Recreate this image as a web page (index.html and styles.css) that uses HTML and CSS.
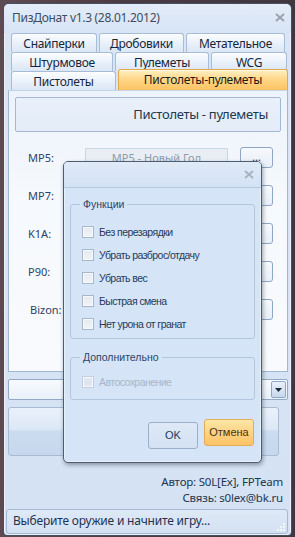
FILE: index.html
```html
<!DOCTYPE html>
<html>
<head>
<meta charset="utf-8">
<link rel="stylesheet" href="styles.css">
</head>
<body>
<div class="window">
  <div class="titlebar">
    <span class="title">ПизДонат v1.3 (28.01.2012)</span>
    <svg class="close" width="10" height="9" viewBox="0 0 10 9"><path d="M1 1 L9 8 M9 1 L1 8" stroke="#9aa3ae" stroke-width="2" fill="none"/></svg>
  </div>
  <div class="tabs">
    <div class="tabrow">
      <div class="tab w86">Снайперки</div>
      <div class="tab w85">Дробовики</div>
      <div class="tab w99">Метательное</div>
    </div>
    <div class="tabrow">
      <div class="tab w102">Штурмовое</div>
      <div class="tab w94">Пулеметы</div>
      <div class="tab w76">WCG</div>
    </div>
    <div class="tabrow">
      <div class="tab w105">Пистолеты</div>
      <div class="tab sel">Пистолеты-пулеметы</div>
    </div>
  </div>
  <div class="panel">
    <div class="header">Пистолеты - пулеметы</div>
    <div class="rows">
      <div class="row"><span class="lbl">MP5:</span><div class="txt">MP5 - Новый Год</div><div class="dots">...</div></div>
      <div class="row"><span class="lbl">MP7:</span><div class="txt"></div><div class="dots">...</div></div>
      <div class="row"><span class="lbl">K1A:</span><div class="txt"></div><div class="dots">...</div></div>
      <div class="row"><span class="lbl">P90:</span><div class="txt"></div><div class="dots">...</div></div>
      <div class="row"><span class="lbl bz">Bizon:</span><div class="txt"></div><div class="dots">...</div></div>
    </div>
  </div>
  <div class="combo"><div class="drop"><svg width="7" height="4" viewBox="0 0 7 4"><path d="M0 0 H7 L3.5 4 Z" fill="#1e2a3a"/></svg></div></div>
  <div class="bigbtn"></div>
  <div class="author">
    <div>Автор: S0L[Ex], FPTeam</div>
    <div>Связь: s0lex@bk.ru</div>
  </div>
  <div class="status">Выберите оружие и начните игру...
    <svg class="grip" width="10" height="10" viewBox="0 0 10 10"><g fill="#f4f8fc"><rect x="7" y="1" width="2" height="2"/><rect x="4" y="4" width="2" height="2"/><rect x="7" y="4" width="2" height="2"/><rect x="1" y="7" width="2" height="2"/><rect x="4" y="7" width="2" height="2"/><rect x="7" y="7" width="2" height="2"/></g></svg>
  </div>

  <div class="dialog">
    <div class="dtitle">
      <svg class="dclose" width="10" height="9" viewBox="0 0 10 9"><path d="M1 1 L9 8 M9 1 L1 8" stroke="#a9b2bd" stroke-width="2" fill="none"/></svg>
    </div>
    <div class="dbody">
      <fieldset class="group g1">
        <legend>Функции</legend>
        <label class="chk"><span class="box"></span>Без перезарядки</label>
        <label class="chk"><span class="box"></span>Убрать разброс/отдачу</label>
        <label class="chk"><span class="box"></span>Убрать вес</label>
        <label class="chk"><span class="box"></span>Быстрая смена</label>
        <label class="chk"><span class="box"></span>Нет урона от гранат</label>
      </fieldset>
      <fieldset class="group g2">
        <legend>Дополнительно</legend>
        <label class="chk dis"><span class="box"></span>Автосохранение</label>
      </fieldset>
      <div class="dbtns">
        <div class="btn ok">OK</div>
        <div class="btn cancel">Отмена</div>
      </div>
    </div>
  </div>
</div>
</body>
</html>
```
FILE: styles.css
```css
html, body {
  margin: 0;
  padding: 0;
}
body {
  width: 295px;
  height: 537px;
  overflow: hidden;
  background: linear-gradient(90deg, #5d4a52 0%, #4b3b44 40%, #3f3640 100%);
  font-family: "Noto Sans", "Open Sans", sans-serif;
}
.window {
  position: relative;
  margin: 3px 0 0 3px;
  width: 289px;
  height: 533px;
  box-sizing: border-box;
  border: 1px solid #46505e;
  border-radius: 6px 6px 4px 4px;
  background: linear-gradient(180deg, #dae6f6 0%, #d4e2f4 100%);
  box-shadow: inset 0 0 0 1px #eaf1fa;
}
.titlebar {
  height: 29px;
  display: flex;
  align-items: center;
  justify-content: space-between;
  padding: 0 6px 0 8px;
  box-sizing: border-box;
  background: linear-gradient(180deg, #e3ecf8 0%, #d7e4f5 100%);
  border-radius: 5px 5px 0 0;
}
.title {
  font-size: 12px;
  color: #3d4c60;
  letter-spacing: -0.3px;
  margin-top: -2px;
}
.close { margin-top: -3px; }

.tabs {
  padding-left: 7px;
}
.tabrow {
  display: flex;
  height: 19px;
}
.tab {
  box-sizing: border-box;
  height: 19px;
  margin-right: 2px;
  border: 1px solid #a7bcd6;
  border-bottom: none;
  border-radius: 3px 3px 0 0;
  background: linear-gradient(180deg, #fbfdff 0%, #e6eff9 60%, #dce7f5 100%);
  font-size: 12px;
  letter-spacing: -0.3px;
  color: #15263c;
  text-align: center;
  line-height: 19px;
  box-shadow: inset 0 1px 0 #ffffff;
}
.w86 { width: 86px; }
.w85 { width: 85px; }
.w99 { width: 99px; }
.w102 { width: 102px; }
.w94 { width: 94px; }
.w76 { width: 76px; }
.w105 { width: 105px; }
.tab.sel {
  width: 170px;
  height: 21px;
  margin-top: -2px;
  line-height: 19px;
  border-color: #e0a94d;
  background: linear-gradient(180deg, #fff0c4 0%, #fed88a 45%, #fcc260 100%);
  box-shadow: inset 0 1px 0 #fff8e4;
  color: #1c1a14;
  position: relative;
  z-index: 2;
}

.panel {
  margin-left: 4px;
  width: 280px;
  height: 282px;
  box-sizing: border-box;
  border: 1px solid #a0b6d2;
  border-top: 1px solid #c4d3e6;
  background: linear-gradient(180deg, #edf3fb 0%, #f6f9fd 40%, #f8fafd 100%);
  padding: 6px 6px 0 6px;
}
.header {
  height: 35px;
  box-sizing: border-box;
  border: 1px solid #a3b8d4;
  border-radius: 2px;
  background: linear-gradient(180deg, #e9f0fa 0%, #e3ecf8 100%);
  text-align: right;
  padding-right: 12px;
  font-size: 13px;
  letter-spacing: -0.3px;
  line-height: 33px;
  color: #23364f;
}
.rows {
  display: flex;
  flex-direction: column;
  gap: 17px;
  margin-top: 15px;
}
.row {
  display: flex;
  align-items: center;
  height: 21px;
}
.lbl {
  width: 70px;
  padding-left: 13px;
  box-sizing: border-box;
  font-size: 11px;
  color: #2b4266;
}
.lbl.bz { padding-left: 15px; }
.txt {
  width: 143px;
  height: 20px;
  box-sizing: border-box;
  border: 1px solid #c9d6e6;
  background: #e9eef5;
  font-size: 11px;
  color: #8d9bab;
  text-align: center;
  line-height: 18px;
  border-radius: 1px;
}
.dots {
  width: 33px;
  height: 21px;
  margin-left: 12px;
  box-sizing: border-box;
  border: 1px solid #8fa6c4;
  border-radius: 3px;
  background: linear-gradient(180deg, #f6f9fd 0%, #e8eff8 100%);
  text-align: center;
  font-size: 11px;
  line-height: 17px;
  color: #23364f;
}

.combo {
  margin: 7px 0 0 4px;
  width: 280px;
  height: 21px;
  box-sizing: border-box;
  border: 1px solid #93a9c6;
  border-radius: 2px;
  background: linear-gradient(180deg, #f8fbfe 0%, #e9f0f9 100%);
  display: flex;
  justify-content: flex-end;
  align-items: center;
  padding-right: 1px;
}
.drop {
  width: 15px;
  height: 17px;
  box-sizing: border-box;
  border: 1px solid #8fa6c4;
  border-radius: 2px;
  background: linear-gradient(180deg, #e9f0f9 0%, #c7d8ee 100%);
  display: flex;
  align-items: center;
  justify-content: center;
}
.bigbtn {
  margin: 7px 0 0 4px;
  width: 271px;
  height: 49px;
  box-sizing: border-box;
  border: 1px solid #a7bbd4;
  border-radius: 3px;
  background: linear-gradient(180deg, #e9f1fb 0%, #dde8f6 45%, #cbdcf0 50%, #c6d8ee 100%);
}
.author {
  margin-top: 18px;
  padding-right: 8px;
  text-align: right;
  font-size: 11.5px;
  letter-spacing: -0.2px;
  line-height: 16px;
  color: #23364f;
}
.status {
  position: relative;
  margin: 3px 0 0 2px;
  width: 282px;
  height: 25px;
  box-sizing: border-box;
  border: 1px solid #a4b9d4;
  border-radius: 3px;
  background: linear-gradient(180deg, #dfe9f6 0%, #d3e1f3 100%);
  padding-left: 6px;
  font-size: 12px;
  letter-spacing: -0.2px;
  line-height: 22px;
  color: #1f3250;
}
.grip {
  position: absolute;
  right: 1px;
  bottom: 1px;
}

/* dialog overlay */
.dialog {
  position: absolute;
  left: 59px;
  top: 157px;
  width: 199px;
  height: 302px;
  box-sizing: border-box;
  border: 1px solid #4f5d70;
  border-radius: 5px;
  background: #d5e4f7;
  box-shadow: 1px 2px 4px rgba(40, 50, 70, 0.45), inset 0 0 0 1px #e8f0fa;
  overflow: hidden;
}
.dtitle {
  height: 26px;
  box-sizing: border-box;
  border-bottom: 1px solid #b6c9e1;
  background: linear-gradient(180deg, #e0eaf8 0%, #d3e2f5 100%);
  display: flex;
  justify-content: flex-end;
  align-items: center;
  padding-right: 7px;
}
.dbody {
  padding: 0 6px;
}
.group {
  margin: 0;
  border: 1px solid #b3c6df;
  border-radius: 3px;
  padding: 0 0 0 11px;
}
.group legend {
  padding: 0 3px;
  margin-left: -2px;
  font-family: "Liberation Sans", sans-serif;
  font-size: 10.5px;
  color: #2e4568;
}
.g1 {
  margin-top: 10px;
  height: 141px;
  box-sizing: border-box;
  padding-top: 10px;
}
.g2 {
  margin-top: 12px;
  height: 49px;
  box-sizing: border-box;
  padding-top: 7px;
}
.chk {
  display: flex;
  align-items: center;
  height: 23px;
  font-family: "Liberation Sans", sans-serif;
  font-size: 10.5px;
  letter-spacing: -0.55px;
  color: #253a5a;
}
.box {
  width: 10px;
  height: 10px;
  border: 1px solid #a8b8cb;
  background: linear-gradient(180deg, #e4eaf1 0%, #f1f4f8 100%);
  margin-right: 5px;
  box-shadow: inset 0 0 0 1px #f6f8fb;
}
.chk.dis { color: #a7b6c9; }
.chk.dis .box { border-color: #c3cfdd; background: #dde6f1; }
.dbtns {
  display: flex;
  justify-content: flex-end;
  gap: 6px;
  margin-top: 19px;
  padding-right: 1px;
  align-items: flex-start;
}
.btn {
  box-sizing: border-box;
  text-align: center;
  font-family: "Liberation Sans", sans-serif;
  font-size: 11px;
  border-radius: 3px;
}
.ok {
  width: 50px;
  height: 27px;
  margin-top: 3px;
  border: 1px solid #9bb0cb;
  background: linear-gradient(180deg, #dfe9f6 0%, #d3e1f3 100%);
  line-height: 25px;
  color: #253a5a;
}
.cancel {
  width: 50px;
  height: 27px;
  border: 1px solid #e2ad58;
  background: linear-gradient(180deg, #ffe7a8 0%, #fed486 45%, #fdc366 100%);
  line-height: 25px;
  color: #4a3310;
}
```
